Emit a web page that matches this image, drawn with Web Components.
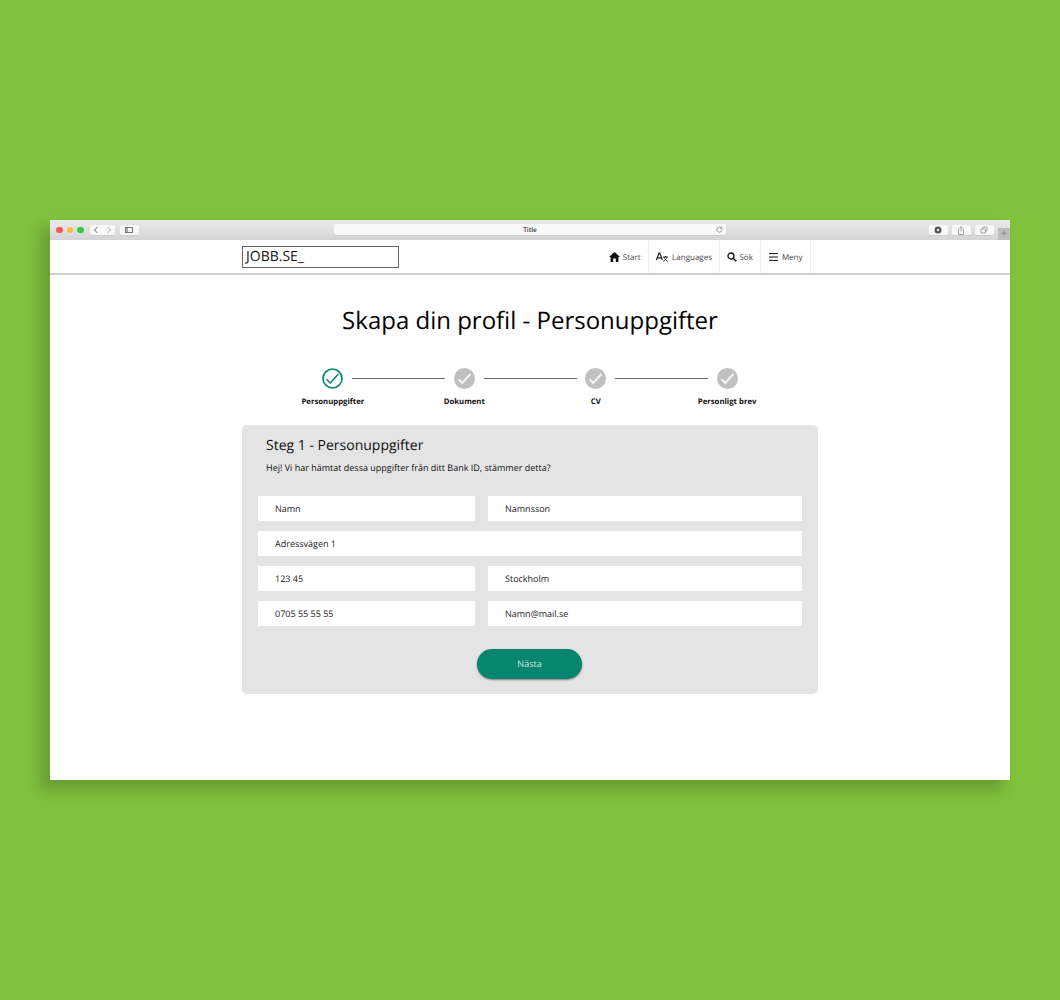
<!DOCTYPE html>
<html>
<head>
<meta charset="utf-8">
<style>
html, body {
  margin: 0;
  height: 1000px;
  overflow: hidden;
  background-color: #7fc23d;
  font-family: "Open Sans", sans-serif;
  text-rendering: geometricPrecision;
}
body {
  padding: 220px 50px 0;
  box-sizing: border-box;
}
</style>
</head>
<body>

<browser-window>
  <site-nav>
    <nav-item label="Start" icon="home"></nav-item>
    <nav-item label="Languages" icon="lang"></nav-item>
    <nav-item label="Sök" icon="search"></nav-item>
    <nav-item label="Meny" icon="menu"></nav-item>
  </site-nav>
  <page-title>Skapa din profil - Personuppgifter</page-title>
  <step-tracker>
    <step-item label="Personuppgifter" active></step-item>
    <step-item label="Dokument"></step-item>
    <step-item label="CV"></step-item>
    <step-item label="Personligt brev"></step-item>
  </step-tracker>
  <profile-card heading="Steg 1 - Personuppgifter" intro="Hej! Vi har hämtat dessa uppgifter från ditt Bank ID, stämmer detta?">
    <form-field>Namn</form-field>
    <form-field>Namnsson</form-field>
    <form-field wide>Adressvägen 1</form-field>
    <form-field>123 45</form-field>
    <form-field>Stockholm</form-field>
    <form-field>0705 55 55 55</form-field>
    <form-field>Namn@mail.se</form-field>
    <primary-button slot="action">Nästa</primary-button>
  </profile-card>
</browser-window>

<script>
class BrowserWindow extends HTMLElement {
  constructor() {
    super();
    this.attachShadow({mode: 'open'}).innerHTML = `
      <style>
        :host {
          display: block;
          width: 960px;
          height: 560px;
          background: #fff;
          box-shadow: -9px 9px 12px 2px rgba(0, 0, 0, 0.17);
          box-sizing: border-box;
        }
        .chrome {
          height: 20px;
          background: linear-gradient(#ebebeb, #d4d4d4);
          display: flex;
          align-items: center;
          padding: 0 0 0 6px;
          position: relative;
          color: #555;
        }
        .dots { display: flex; gap: 4px; }
        .dots i { width: 6.500px; height: 6.500px; border-radius: 50%; display: block; }
        .btn {
          height: 10px;
          background: #f8f8f8;
          border-radius: 2px;
          display: flex;
          align-items: center;
          justify-content: center;
          box-shadow: 0 1px 0 #cdcdcd;
        }
        .btn svg { display: block; }
        .url {
          position: absolute;
          left: 284px;
          width: 392px;
          top: 4px;
          height: 11px;
          background: #f9f9f9;
          border-radius: 2px;
          box-shadow: 0 1px 0 #cdcdcd;
          font: 600 6.500px/11px "Open Sans", sans-serif;
          color: #333;
          text-align: center;
        }
        .url svg { position: absolute; right: 3px; top: 2px; }
        .right { margin-left: auto; display: flex; align-items: center; gap: 4.400px; height: 20px; }
        .plus {
          width: 12px; height: 12px;
          background: #bdbdbd;
          align-self: flex-end;
          color: #888;
          font: 11px/12px "Open Sans", sans-serif;
          text-align: center;
        }
      </style>
      <div class="chrome">
        <div class="dots">
          <i style="background:#fc5753"></i><i style="background:#fdbc40"></i><i style="background:#33c748"></i>
        </div>
        <div class="btn" style="width:12.500px;margin-left:6.500px;border-radius:2px 0 0 2px">
          <svg width="6" height="8" viewBox="0 0 6 8"><path d="M4.500 1L1.500 4l3 3" fill="none" stroke="#666" stroke-width="1"/></svg>
        </div>
        <div class="btn" style="width:12.500px;border-radius:0 2px 2px 0">
          <svg width="6" height="8" viewBox="0 0 6 8"><path d="M1.500 1l3 3-3 3" fill="none" stroke="#aaa" stroke-width="1"/></svg>
        </div>
        <div class="btn" style="width:18.500px;margin-left:5px">
          <svg width="8" height="6" viewBox="0 0 8 6"><rect x=".5" y=".5" width="7" height="5" fill="none" stroke="#777"/><rect x="1" y="1" width="2" height="4" fill="#aaa"/></svg>
        </div>
        <div class="url">Title
          <svg width="7" height="7" viewBox="0 0 7 7"><path d="M5.600 2.200A2.600 2.600 0 1 0 6 3.500M5.700.8v1.600H4.100" fill="none" stroke="#777" stroke-width=".7"/></svg>
        </div>
        <div class="right">
          <div class="btn" style="width:18.600px">
            <svg width="8" height="8" viewBox="0 0 8 8"><circle cx="4" cy="4" r="3.500" fill="#555"/><circle cx="4" cy="4" r="1.200" fill="#eee"/></svg>
          </div>
          <div class="btn" style="width:18.600px">
            <svg width="8" height="9" viewBox="0 0 8 9"><path d="M2.500 3H1.500v5.500h5V3h-1M4 5.500V.7M2.800 1.800L4 .6l1.200 1.200" fill="none" stroke="#888" stroke-width=".7"/></svg>
          </div>
          <div class="btn" style="width:18.600px">
            <svg width="8" height="8" viewBox="0 0 8 8"><path d="M1 3h4.500v4H1zM2.800 3V1H7v4H5.500" fill="none" stroke="#888" stroke-width=".7"/></svg>
          </div>
          <div class="plus">+</div>
        </div>
      </div>
      <slot></slot>
    `;
  }
}

class SiteNav extends HTMLElement {
  constructor() {
    super();
    this.attachShadow({mode: 'open'}).innerHTML = `
      <style>
        :host {
          display: flex;
          align-items: center;
          height: 33px;
          border-bottom: 2px solid #cfcfcf;
          padding: 0 199px 0 192px;
        }
        .logo {
          width: 157px;
          height: 22px;
          box-sizing: border-box;
          border: 1px solid #666;
          font: 14px/20px "Open Sans", sans-serif;
          color: #111;
          padding-left: 3px;
        }
        nav { margin-left: auto; display: flex; height: 33px; }
      </style>
      <div class="logo">JOBB.SE_</div>
      <nav><slot></slot></nav>
    `;
  }
}

const NAV_ICONS = {
  home: '<svg width="11" height="10" viewBox="0 0 11 10"><path d="M5.500 0L0 5h1.600v5h2.600V6.600h2.600V10h2.600V5H11z" fill="#111"/></svg>',
  lang: '<svg width="12" height="10" viewBox="0 0 12 10"><path d="M.4 8L3 1.200h.8L6.400 8M1.500 5.800h3.800" fill="none" stroke="#222" stroke-width="1.200"/><path d="M7 5h5M9.500 4v1M8 5.200c.5 1.800 2 3.200 3.800 4.300M11 5.200c-.5 1.800-2 3.200-3.800 4.300" fill="none" stroke="#222" stroke-width="1"/></svg>',
  search: '<svg width="10" height="10" viewBox="0 0 10 10"><circle cx="4" cy="4" r="3" fill="none" stroke="#111" stroke-width="1.300"/><path d="M6.200 6.200L9.300 9.300" stroke="#111" stroke-width="1.500"/></svg>',
  menu: '<svg width="9" height="8" viewBox="0 0 9 8"><path d="M0 .6h9M0 4h9M0 7.400h9" stroke="#111" stroke-width="1"/></svg>'
};

class NavItem extends HTMLElement {
  constructor() {
    super();
    const name = this.getAttribute('icon');
    const gap = name === 'search' ? 2 : name === 'home' ? 3 : 4;
    const pad = name === 'lang' ? 7 : 7.5;
    this.attachShadow({mode: 'open'}).innerHTML = `
      <style>
        :host {
          display: flex;
          align-items: center;
          gap: ${gap}px;
          padding: 0 ${pad}px;
          border-right: 1px solid #f0f0f0;
          font: 8px "Open Sans", sans-serif;
          color: #444;
        }
        svg { display: block; }
        span { position: relative; top: .5px; }
      </style>
      ${NAV_ICONS[name]}<span>${this.getAttribute('label')}</span>
    `;
  }
}

class PageTitle extends HTMLElement {
  constructor() {
    super();
    this.attachShadow({mode: 'open'}).innerHTML = `
      <style>
        :host {
          display: block;
          padding-top: 27px;
          text-align: center;
          font: 24px/38px "Open Sans", sans-serif;
          color: #000;
        }
      </style>
      <slot></slot>
    `;
  }
}

class StepTracker extends HTMLElement {
  constructor() {
    super();
    this.attachShadow({mode: 'open'}).innerHTML = `
      <style>
        :host {
          display: flex;
          justify-content: center;
          margin-top: 28px;
          height: 57px;
        }
      </style>
      <slot></slot>
    `;
  }
}

class StepItem extends HTMLElement {
  constructor() {
    super();
    const active = this.hasAttribute('active');
    const isLast = !this.nextElementSibling;
    const circle = active
      ? '<circle cx="10.500" cy="10.500" r="9.500" fill="#fff" stroke="#07856e" stroke-width="1.700"/><path d="M4.500 11.300l3.700 3.700 8.300-9" fill="none" stroke="#07856e" stroke-width="1.500"/>'
      : '<circle cx="10.500" cy="10.500" r="10.500" fill="#c0c0c0"/><path d="M4.500 11.300l3.700 3.700 8.300-9" fill="none" stroke="#f4f4f4" stroke-width="2"/>';
    this.attachShadow({mode: 'open'}).innerHTML = `
      <style>
        :host {
          display: block;
          width: 131.400px;
          position: relative;
          text-align: center;
        }
        svg { display: block; margin: 0 auto; }
        .label {
          margin-top: 7px;
          font: 700 7.750px/13px "Open Sans", sans-serif;
          color: #111;
          white-space: nowrap;
        }
        .line {
          position: absolute;
          left: calc(50% + 19.500px);
          width: 93px;
          top: 10px;
          height: 1px;
          background: #666;
          display: ${isLast ? 'none' : 'block'};
        }
      </style>
      <svg width="21" height="21" viewBox="0 0 21 21">${circle}</svg>
      <div class="line"></div>
      <div class="label">${this.getAttribute('label')}</div>
    `;
  }
}

class ProfileCard extends HTMLElement {
  constructor() {
    super();
    this.attachShadow({mode: 'open'}).innerHTML = `
      <style>
        :host {
          display: block;
          width: 576px;
          height: 269px;
          margin: 0 auto;
          box-sizing: border-box;
          background: #e4e4e4;
          border-radius: 5px;
          padding: 10px 16px 0;
          color: #111;
        }
        h2 {
          margin: 0 0 0 8px;
          font: 400 14px/22px "Open Sans", sans-serif;
        }
        p {
          margin: 4px 0 0 8px;
          font: 9px/14px "Open Sans", sans-serif;
        }
        .grid {
          display: grid;
          grid-template-columns: 217px 314px;
          column-gap: 13px;
          row-gap: 10px;
          margin-top: 21px;
        }
        .action { display: flex; justify-content: center; margin-top: 23px; padding-right: 1px; }
      </style>
      <h2>${this.getAttribute('heading')}</h2>
      <p>${this.getAttribute('intro')}</p>
      <div class="grid"><slot></slot></div>
      <div class="action"><slot name="action"></slot></div>
    `;
  }
}

class FormField extends HTMLElement {
  constructor() {
    super();
    this.attachShadow({mode: 'open'}).innerHTML = `
      <style>
        :host {
          display: block;
          height: 25px;
          background: #fff;
          padding-left: 17px;
          font: 9px/25px "Open Sans", sans-serif;
          color: #222;
        }
        :host([wide]) { grid-column: 1 / -1; }
      </style>
      <slot></slot>
    `;
  }
}

class PrimaryButton extends HTMLElement {
  constructor() {
    super();
    this.attachShadow({mode: 'open'}).innerHTML = `
      <style>
        :host {
          display: block;
          width: 105px;
          height: 30px;
          border-radius: 15px;
          background: #07856e;
          box-shadow: 0 1px 2px rgba(0, 0, 0, 0.45);
          color: #cfe6df;
          text-align: center;
          font: 9px/30px "Open Sans", sans-serif;
        }
      </style>
      <slot></slot>
    `;
  }
}

customElements.define('browser-window', BrowserWindow);
customElements.define('site-nav', SiteNav);
customElements.define('nav-item', NavItem);
customElements.define('page-title', PageTitle);
customElements.define('step-tracker', StepTracker);
customElements.define('step-item', StepItem);
customElements.define('profile-card', ProfileCard);
customElements.define('form-field', FormField);
customElements.define('primary-button', PrimaryButton);
</script>
</body>
</html>
